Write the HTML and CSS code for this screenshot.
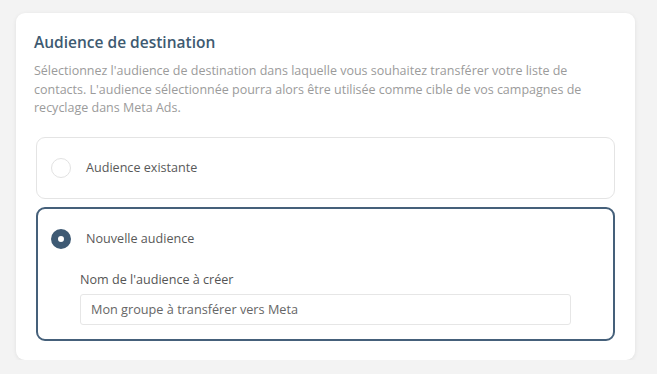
FILE: index.html
```html
<!DOCTYPE html>
<html lang="fr">
<head>
<meta charset="utf-8">
<link rel="stylesheet" href="styles.css">
</head>
<body>
<section class="card">
  <h2 class="title">Audience de destination</h2>
  <p class="desc">Sélectionnez l'audience de destination dans laquelle vous souhaitez transférer votre liste de contacts. L'audience sélectionnée pourra alors être utilisée comme cible de vos campagnes de recyclage dans Meta Ads.</p>
  <div class="options">
    <div class="option">
      <div class="option-head">
        <span class="radio"></span>
        <span class="option-label">Audience existante</span>
      </div>
    </div>
    <div class="option option-active">
      <div class="option-head">
        <span class="radio radio-checked"></span>
        <span class="option-label">Nouvelle audience</span>
      </div>
      <div class="field">
        <label class="field-label">Nom de l'audience à créer</label>
        <div class="input">Mon groupe à transférer vers Meta</div>
      </div>
    </div>
  </div>
</section>
</body>
</html>
```
FILE: styles.css
```css
html, body {
  margin: 0;
  padding: 0;
}
body {
  background: #f3f3f3;
  font-family: "Open Sans", "Liberation Sans", sans-serif;
  padding: 13px 0 0 16px;
}
.card {
  box-sizing: border-box;
  width: 619px;
  height: 347px;
  background: #fff;
  border-radius: 9px;
  box-shadow: 0 1px 4px rgba(0, 0, 0, 0.08);
  padding: 19px 20px 0 18px;
}
.title {
  margin: 0;
  font-size: 15.5px;
  line-height: 20px;
  font-weight: 600;
  color: #3e5a71;
}
.desc {
  margin: 10px 0 0;
  font-size: 12.5px;
  line-height: 18.5px;
  color: #9b9b9b;
}
.options {
  margin: 19px 0 0 2px;
  display: flex;
  flex-direction: column;
  gap: 8px;
}
.option {
  box-sizing: border-box;
  border: 1px solid #e4e4e4;
  border-radius: 9px;
  height: 62px;
  padding: 20px 14px 0;
}
.option-active {
  border: 2px solid #45607a;
  height: 134px;
  padding: 20px 42px 0 13px;
}
.option-head {
  display: flex;
  align-items: center;
  gap: 15px;
  height: 20px;
}
.radio {
  box-sizing: border-box;
  width: 20px;
  height: 20px;
  border-radius: 50%;
  border: 1px solid #e2e2e2;
  background: #fff;
  flex: none;
}
.radio-checked {
  border: 7px solid #3e5a74;
  background: #fff;
}
.option-label {
  font-size: 12.6px;
  color: #595959;
}
.field {
  margin: 23px 0 0 29px;
}
.field-label {
  display: block;
  font-size: 12.6px;
  line-height: 16px;
  color: #555;
}
.input {
  box-sizing: border-box;
  margin-top: 6px;
  height: 31px;
  border: 1px solid #e6e6e6;
  border-radius: 3px;
  padding: 0 10px;
  display: flex;
  align-items: center;
  font-size: 12.7px;
  color: #666;
}
```
